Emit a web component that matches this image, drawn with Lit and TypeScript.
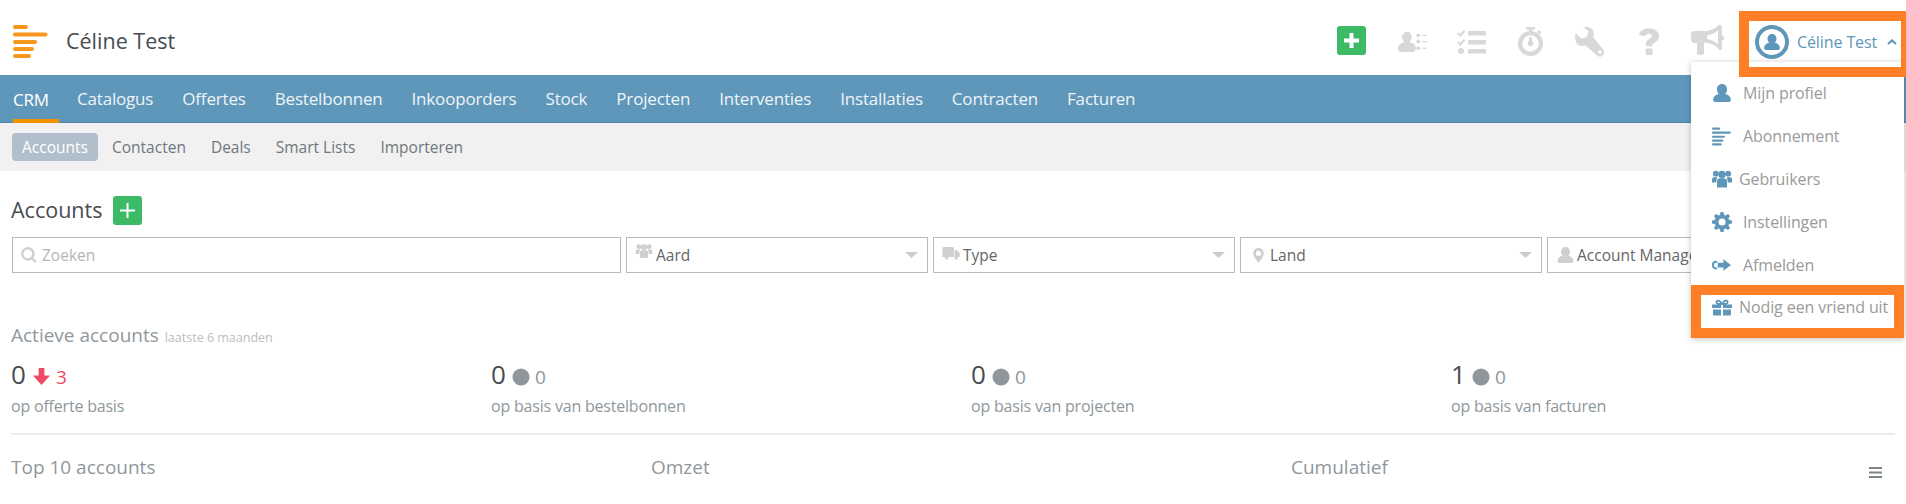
import { LitElement, html, css, svg } from "lit";
import { customElement } from "lit/decorators.js";

const ic = (vb: string, body: unknown, cls = "") =>
  html`<svg class=${cls} viewBox=${vb} fill="currentColor" aria-hidden="true">${body}</svg>`;

const user = svg`<path d="M8 0c2.600 0 4.500 2.100 4.500 4.800 0 1.700-.7 3.100-1.800 4 2.900.5 5 2.200 5.200 5 .1 1.300-.7 2.200-2 2.200H2.100c-1.300 0-2.100-.9-2-2.200.2-2.800 2.300-4.500 5.200-5-1.100-.9-1.800-2.300-1.800-4C3.500 2.100 5.400 0 8 0z"/>`;
const users = svg`<circle cx="3.800" cy="3.200" r="2.900"/><circle cx="16.200" cy="3.200" r="2.900"/><circle cx="10" cy="4" r="3.700"/><path d="M0 12V9C0 7.300 1 6.700 2.500 6.700H5.200L4 12zM20 12V9c0-1.700-1-2.300-2.500-2.300h-2.700L16 12z"/><path d="M5 17v-6.500c0-2 1.500-2.800 3-2.800h4c1.500 0 3 .8 3 2.800V17z"/>`;
const cog = svg`<path fill-rule="evenodd" d="M8.500 0h3l.5 2.800 1.700.7L16 1.900 18.100 4l-1.600 2.300.7 1.700 2.800.5v3l-2.800.5-.7 1.700 1.600 2.300-2.100 2.100-2.300-1.600-1.700.7-.5 2.800h-3L8 17.200l-1.700-.7L4 18.100 1.900 16l1.600-2.300-.7-1.700L0 11.500v-3L2.800 8l.7-1.700L1.900 4 4 1.900l2.300 1.600L8 2.800zM10 6.500a3.500 3.500 0 1 0 0 7 3.500 3.500 0 0 0 0-7z"/>`;
const gift = svg`<path d="M0 5h9v3.500H0zM11 5h9v3.500h-9zM1 10h8v6H2.500C1.500 16 1 15.500 1 14.500zM11 10h8v4.500c0 1-.5 1.500-1.500 1.500H11z"/><path fill="none" stroke="currentColor" stroke-width="1.800" d="M10 4.500C8 1 6.500.9 5.500 1.200 4 1.700 4 4 6 4.500zM10 4.500c2-3.500 3.500-3.600 4.500-3.300 1.500.5 1.500 2.800-.5 3.300z"/>`;
const signout = svg`<path d="M5.500 1.500H4C1.500 1.500 0 3 0 5.500v1C0 9 1.500 10.500 4 10.500h1.500v-2H4c-1 0-1.700-.6-1.700-2v-1c0-1.400.7-2 1.700-2h1.500z"/><path d="M12 0l8 6-8 6V8.500H6v-5h6z"/>`;
const bars = svg`<rect x="0" y="0" width="15" height="4" rx="2"/><rect x="0" y="7.500" width="34.500" height="4" rx="2"/><rect x="0" y="15" width="24" height="4" rx="2"/><rect x="0" y="22" width="21" height="4" rx="2"/><rect x="0" y="29" width="18" height="4" rx="2"/>`;
const plusBold = svg`<path d="M5.500 0h4v5.500H15v4H9.500V15h-4V9.500H0v-4h5.500z"/>`;
const plusThin = svg`<path d="M6.500 0h2v6.500H15v2H8.500V15h-2V8.500H0v-2h6.500z"/>`;

@customElement("app-root")
export class AppRoot extends LitElement {
  static styles = css`
    :host { display: block; width: 1906px; height: 504px; overflow: hidden; position: relative; background: #fff;
      font-family: "Open Sans", sans-serif; color: #4a4a4a; }
    svg { display: block; flex: none; }
    .top { height: 75px; display: flex; align-items: center; padding: 7px 0 0 13px; box-sizing: border-box; }
    .logo { width: 35px; height: 33px; color: #f7981d; }
    .brand { font-size: 21.500px; margin-left: 18px; color: #484c50; margin-top: -1px; }
    .tools { margin-left: auto; display: flex; align-items: center; color: #d8d8d8; margin-right: 18px; margin-top: 1px; }
    .tool { width: 59px; display: flex; justify-content: center; align-items: center; height: 34px; }
    .t1 { width: 29px; height: 20px; }
    .t2 { width: 29px; height: 24px; }
    .t3 { width: 25px; height: 29px; }
    .t4 { width: 29px; height: 30px; }
    .t5 { width: 20px; height: 27px; }
    .t6 { width: 33px; height: 30px; margin-top: -3px; }
    .plus { width: 29px; height: 29px; border-radius: 3px; background: #3dba66; color: #fff; display: flex; align-items: center; justify-content: center; flex: none; }
    .tools .plus { margin: -2px 17px 0 0; }
    .plus svg { width: 15px; height: 15px; }
    .me { display: flex; align-items: center; color: #5f97ba; font-size: 16px; width: 151px; box-sizing: border-box; letter-spacing: -.1px; margin-top: 1px; }
    .avatar { width: 34px; height: 34px; box-sizing: border-box; border: 4px solid #5f97ba; border-radius: 50%; display: flex; align-items: center; justify-content: center; margin-right: 8px; }
    .avatar svg { width: 16px; height: 16px; }
    .me .c { width: 10px; height: 6px; margin-left: 10px; }
    .nav { height: 48px; background: #5f97ba; border-bottom: 1px solid #4f86a8; box-sizing: border-box; display: flex; align-items: stretch; padding-left: 13px; gap: 29px; color: #eef4f8; font-size: 17px; letter-spacing: -.18px; }
    .nav span { display: flex; align-items: center; }
    .nav .on { color: #fff; border-bottom: 4px solid #f39200; padding-top: 4px; margin-bottom: -1px; padding-right: 10px; margin-right: -11px; box-sizing: border-box; }
    .sub { height: 48px; background: #f1f1f1; display: flex; align-items: center; padding-left: 12px; font-size: 15.500px; color: #6f777d; gap: 25px; }
    .sub .on { background: #b0bfcb; color: #fff; border-radius: 4px; height: 28px; width: 86px; display: flex; align-items: center; justify-content: center; margin-right: -11px; }
    .main { padding: 25px 11px 0; }
    .title { display: flex; align-items: center; height: 29px; font-size: 21.500px; color: #484c50; gap: 11px; }
    .title span { margin-top: -3px; }
    .filters { display: grid; grid-template-columns: 609px 302px 302px 302px 302px; gap: 5px; margin-top: 12px; padding-left: 1px; }
    .f { height: 36px; box-sizing: border-box; border: 1px solid #bbb; display: flex; align-items: center; padding-left: 8px; font-size: 15.500px; color: #666; gap: 3px; position: relative; }
    .f svg { color: #cfcfcf; }
    .f.q { color: #b5b5b5; gap: 5px; }
    .s1 { width: 16px; height: 16px; }
    .s2 { width: 18px; height: 14px; margin-bottom: 9px; }
    .s3 { width: 18px; height: 13px; margin-bottom: 4px; }
    .s4 { width: 11px; height: 15px; margin: 0 3px 0 4px; }
    .s5 { width: 17px; height: 16px; margin-left: 1px; }
    .f .dd { position: absolute; right: 9px; top: 14px; width: 13px; height: 6px; background: #ccc; clip-path: polygon(0 0, 100% 0, 50% 100%); }
    .h2 { font-size: 19px; color: #8f979c; }
    .h2 small { font-size: 12.500px; color: #bdbdbd; margin-left: 1px; }
    .act { margin-top: 51px; height: 23px; line-height: 23px; }
    .stats { display: grid; grid-template-columns: repeat(4, 480px); margin-top: 11px; height: 75px; }
    .num { display: flex; align-items: center; height: 34px; font-size: 26px; color: #484c50; gap: 6px; }
    .num span { margin-top: -2px; }
    .num b { font-weight: 400; font-size: 19px; color: #8f979c; margin-top: 3px; margin-left: -1px; }
    .num.down b { color: #ef4a65; }
    .num svg { width: 18px; height: 18px; color: #8f979c; margin-top: 3px; }
    .num.down svg { color: #ef4a65; width: 19px; height: 19px; }
    .lbl { font-size: 16px; line-height: 22px; letter-spacing: -.2px; color: #8f979c; margin-top: 3px; }
    hr { border: 0; border-top: 2px solid #ececec; margin: 0; width: 1884px; }
    .row3 { display: grid; grid-template-columns: 640px 640px 1fr; margin-top: 20px; height: 24px; line-height: 24px; position: relative; }
    .burger { position: absolute; left: 1858px; top: 12px; width: 13px; height: 11px; color: #7d8589; }
    .menu { position: absolute; left: 1691px; top: 62px; width: 213px; height: 276px; background: #fff; box-shadow: 0 1px 6px rgba(0,0,0,.25); box-sizing: border-box; font-size: 16px; letter-spacing: -.1px; color: #9a9a9a; padding-top: 10px; }
    .mi { height: 42.800px; display: flex; align-items: center; padding-left: 20px; }
    .mi .w { width: 21px; display: flex; justify-content: center; color: #5f97ba; margin-right: 11px; }
    .mi.tight .w { margin-right: 7px; }
    .m1 { width: 18px; height: 18px; }
    .m2 { width: 19px; height: 19px; }
    .m3 { width: 20px; height: 18px; }
    .m4 { width: 20px; height: 20px; }
    .m5 { width: 19px; height: 12px; }
    .m6 { width: 20px; height: 17px; }
    .fr { position: absolute; box-sizing: border-box; border: 10px solid #ff7f27; pointer-events: none; }
    .f1 { left: 1739px; top: 11px; width: 172px; height: 66px; }
    .f2 { left: 1691px; top: 285px; width: 213px; height: 53px; }
  `;

  render() {
    const stat = (n: string, d: string, l: string, down = false) => html`<div>
      <div class="num ${down ? "down" : ""}"><span>${n}</span>
        ${down
          ? ic("0 0 20 20", svg`<path d="M7 1h6v8h6l-9 10L1 9h6z"/>`)
          : ic("0 0 20 20", svg`<circle cx="10" cy="10" r="9.500"/>`)}
        <b>${d}</b></div>
      <div class="lbl">${l}</div></div>`;
    const sel = (icon: unknown, t: string) => html`<div class="f">${icon}<span>${t}</span><i class="dd"></i></div>`;
    const mi = (icon: unknown, t: string, tight = false) => html`<div class="mi ${tight ? "tight" : ""}"><span class="w">${icon}</span><span>${t}</span></div>`;
    return html`
      <div class="top">
        ${ic("0 0 35 33", bars, "logo")}
        <div class="brand">Céline Test</div>
        <div class="tools">
          <div class="plus">${ic("0 0 15 15", plusBold)}</div>
          <div class="tool">${ic("0 0 30 21", svg`<path d="M9.500 0c2.800 0 4.700 2.300 4.700 5.200 0 1.800-.8 3.300-2 4.300l.2 1.200c3 .7 5.400 2.500 6 5.500.3 2.200-.6 4.800-2.400 4.800H2.200C.4 21-.5 18.400-.2 16.200c.6-3 3-4.800 6-5.500l.2-1.200c-1.200-1-2-2.500-2-4.300C4 2.300 6.700 0 9.500 0z"/><circle cx="21" cy="3.500" r="2"/><circle cx="21" cy="10" r="2"/><circle cx="21" cy="17" r="2"/><rect x="25" y="3" width="5" height="1.200"/><rect x="25" y="9.500" width="5" height="1.200"/><rect x="25" y="16.500" width="5" height="1.200"/>`, "t1")}</div>
          <div class="tool">${ic("0 0 29 24", svg`<rect x="11" y="1" width="18" height="4.500" rx="1"/><rect x="11" y="10" width="18" height="4.500" rx="1"/><rect x="11" y="19" width="18" height="4.500" rx="1"/><path d="M.8 3 3.300 5.500 7.500.8" fill="none" stroke="currentColor" stroke-width="2.200"/><path d="M.8 12l2.500 2.500 4.200-4.700" fill="none" stroke="currentColor" stroke-width="2.200"/><circle cx="4" cy="21" r="3"/>`, "t2")}</div>
          <div class="tool">${ic("0 0 25 29", svg`<rect x="8" y="0" width="9" height="2.500"/><rect x="11" y="2" width="3" height="3.500"/><path d="M21 3l2.500 2.500-2 2-2.500-2.500z"/><path fill-rule="evenodd" d="M12.500 4a12.500 12.500 0 1 1 0 25 12.500 12.500 0 0 1 0-25zm0 4.200a8.300 8.300 0 1 0 0 16.600 8.300 8.300 0 0 0 0-16.600z"/><rect x="11" y="10" width="3" height="7"/><circle cx="12.500" cy="16.500" r="2.800"/>`, "t3")}</div>
          <div class="tool">${ic("0 0 29 30", svg`<path fill-rule="evenodd" d="M.8 6 6 11.500l4-.8 2.700-2.700.8-4L8.500.6C12-.8 17 .2 18.500 4.500c.7 2 .4 4-.3 5.800l9.700 12c1.700 2.200 1.500 4.600-.2 6.200-1.800 1.700-4 1.700-6-.2l-11.500-10c-1.800.7-4 .9-6 .2C.5 17 -.6 11 .8 6zM25 23.300a1.800 1.800 0 1 0 0 3.600 1.800 1.800 0 0 0 0-3.600z"/>`, "t4")}</div>
          <div class="tool">${ic("0 0 20 27", svg`<path d="M0 7C1 2.500 5 .2 9.800.2 15.500.2 20 3.500 20 8.200c0 3.600-2.200 5-4.600 6.500-1 .7-1.800 1.200-1.800 2.600v1H6.800v-2c0-3 1.500-4.300 3.700-5.600 1.400-.9 2.400-1.500 2.400-2.700 0-1.400-1.500-2.300-3.100-2.300-2 0-3 1-4.100 2.600z"/><rect x="6.800" y="20.500" width="6.800" height="6.500" rx="1"/>`, "t5")}</div>
          <div class="tool">${ic("0 0 33 30", svg`<path fill-rule="evenodd" d="M27.500 0h2c.8 0 1.300.6 1.300 1.300V10c1.400.5 2.200 1.500 2.200 3s-.8 2.500-2.200 3v7.700c0 .7-.5 1.300-1.300 1.300h-2v-1.500C24 20 18.500 18 13 17.600V28c0 1-.7 1.700-1.500 1.700h-4c-.8 0-1.500-.7-1.500-1.700V18H3.500C1.200 18 0 16.500 0 14.200v-4.400C0 7.500 1.200 6 3.500 6H13c5.500 0 11-2 14.500-6zM27 5.500c-3 2.600-7.300 4.500-11 5v3.500c3.700.5 8 2.400 11 5z"/>`, "t6")}</div>
        </div>
        <div class="me">
          <div class="avatar">${ic("0 0 16 16", user)}</div>
          <span>Céline Test</span>
          ${ic("0 0 20 12", svg`<path d="M2 10 10 3l8 7" fill="none" stroke="currentColor" stroke-width="4.500"/>`, "c")}
        </div>
      </div>
      <div class="nav">
        <span class="on">CRM</span><span>Catalogus</span><span>Offertes</span><span>Bestelbonnen</span><span>Inkooporders</span><span>Stock</span><span>Projecten</span><span>Interventies</span><span>Installaties</span><span>Contracten</span><span>Facturen</span>
      </div>
      <div class="sub"><span class="on">Accounts</span><span>Contacten</span><span>Deals</span><span>Smart Lists</span><span>Importeren</span></div>
      <div class="main">
        <div class="title"><span>Accounts</span><div class="plus">${ic("0 0 15 15", plusThin)}</div></div>
        <div class="filters">
          <div class="f q">${ic("0 0 20 20", svg`<path fill-rule="evenodd" d="M8.500 0a8.500 8.500 0 0 1 6.800 13.600l4.300 4.300-2 2-4.300-4.300A8.500 8.500 0 1 1 8.500 0zm0 3a5.500 5.500 0 1 0 0 11 5.500 5.500 0 0 0 0-11z"/>`, "s1")}<span>Zoeken</span></div>
          ${sel(ic("0 0 20 17", users, "s2"), "Aard")}
          ${sel(ic("0 0 24 18", svg`<path d="M0 2c0-1 .7-2 2-2h12c1 0 2 1 2 2v12H0z"/><path d="M17 4h3l4 4.500V14h-7z"/><circle cx="6" cy="15" r="2.500"/><circle cx="19" cy="15" r="2.500"/>`, "s3"), "Type")}
          ${sel(ic("0 0 14 20", svg`<path fill-rule="evenodd" d="M7 0c4 0 7 3 7 7 0 4-4 9-7 13C4 16 0 11 0 7c0-4 3-7 7-7zm0 3.500a3.500 3.500 0 1 0 0 7 3.500 3.500 0 0 0 0-7z"/>`, "s4"), "Land")}
          ${sel(ic("0 0 16 16", user, "s5"), "Account Manager")}
        </div>
        <div class="h2 act">Actieve accounts <small>laatste 6 maanden</small></div>
        <div class="stats">
          ${stat("0", "3", "op offerte basis", true)}
          ${stat("0", "0", "op basis van bestelbonnen")}
          ${stat("0", "0", "op basis van projecten")}
          ${stat("1", "0", "op basis van facturen")}
        </div>
        <hr />
        <div class="row3 h2"><span>Top 10 accounts</span><span>Omzet</span><span>Cumulatief</span>
          ${ic("0 0 13 11", svg`<rect width="13" height="2"/><rect y="4.500" width="13" height="2"/><rect y="9" width="13" height="2"/>`, "burger")}
        </div>
      </div>
      <div class="menu">
        ${mi(ic("0 0 16 16", user, "m1"), "Mijn profiel")}
        ${mi(ic("0 0 35 33", bars, "m2"), "Abonnement")}
        ${mi(ic("0 0 20 17", users, "m3"), "Gebruikers", true)}
        ${mi(ic("0 0 20 20", cog, "m4"), "Instellingen")}
        ${mi(ic("0 0 20 12", signout, "m5"), "Afmelden")}
        ${mi(ic("0 0 20 16", gift, "m6"), "Nodig een vriend uit", true)}
      </div>
      <div class="fr f1"></div>
      <div class="fr f2"></div>
    `;
  }
}
